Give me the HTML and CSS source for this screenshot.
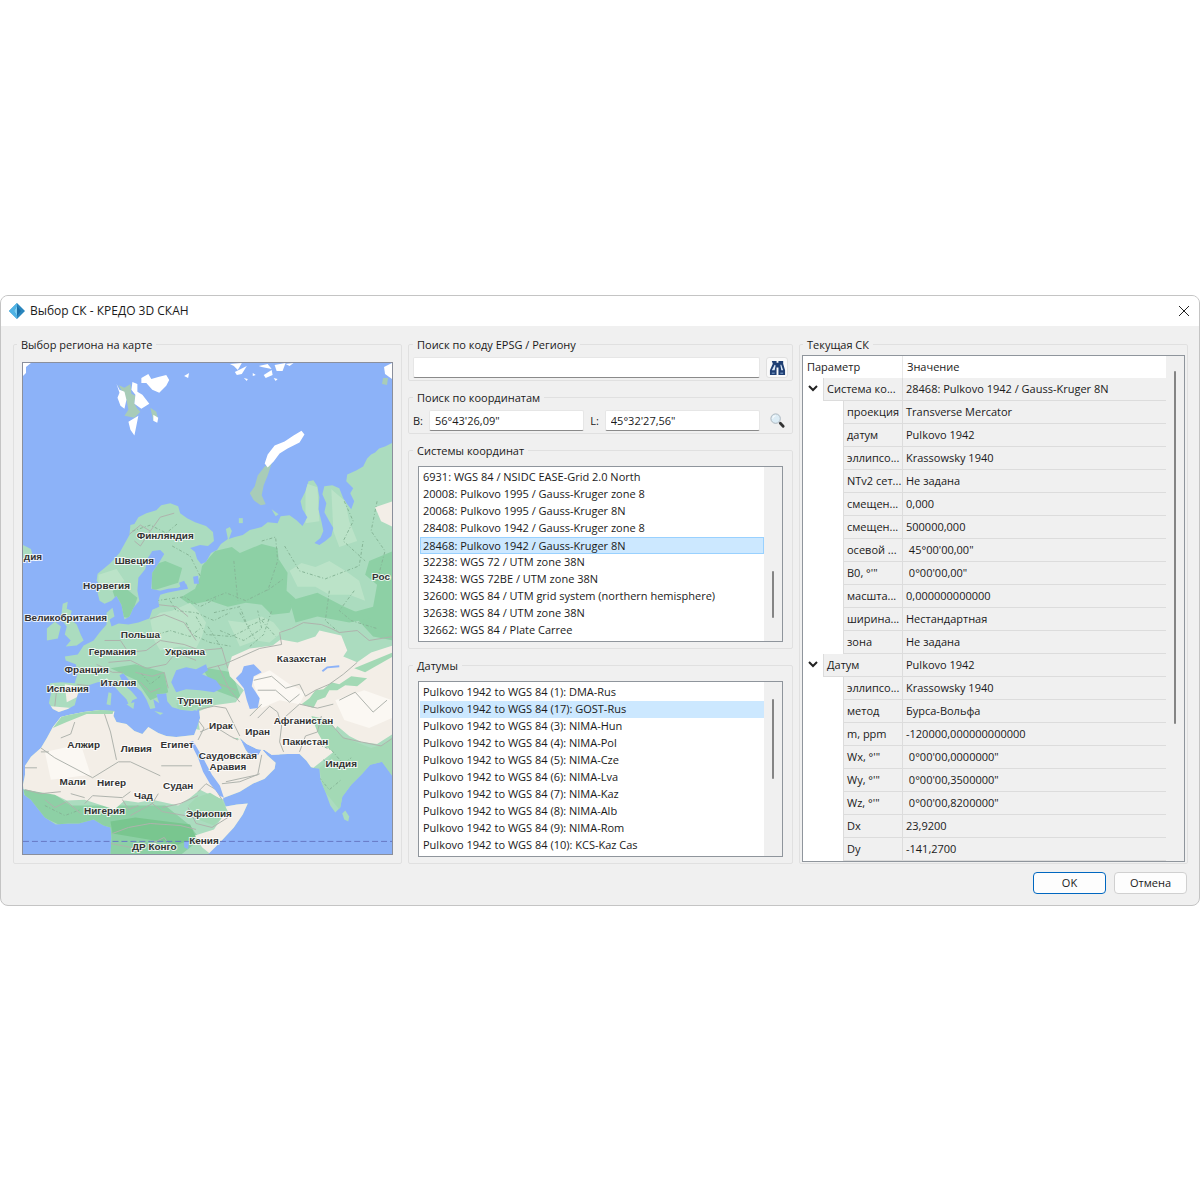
FILE: index.html
```
<!DOCTYPE html>
<html lang="ru">
<head>
    <meta charset="UTF-8">
    <meta name="viewport" content="width=device-width, initial-scale=1.0">
    <title>Выбор СК - КРЕДО 3D СКАН</title>
    <link rel="stylesheet" href="styles.css">
</head>
<body>
    <main class="dialog">
        <header class="titlebar">
            <svg class="logo" viewBox="0 0 16 16">
                <path d="M8 0L16 8L8 16L0 8Z" fill="#2a86bd"/>
                <path d="M8 0L8 16L0 8Z" fill="#4fb4e6"/>
                <path d="M8 3L12 8L8 13L5 8Z" fill="#1b6fa8"/>
                <path d="M8 3L8 13L5 8Z" fill="#7fd0f4"/>
            </svg>
            <h1>Выбор СК - КРЕДО 3D СКАН</h1>
            <button class="close" aria-label="Закрыть">
                <svg viewBox="0 0 12 12"><path d="M1 1L11 11M11 1L1 11" stroke="#222" fill="none"/></svg>
            </button>
        </header>

        <form class="content">
            <fieldset class="map-group">
                <legend>Выбор региона на карте</legend>
                <svg class="map" viewBox="22 361 371 494" preserveAspectRatio="xMidYMid slice">
                    <defs>
                        <path id="land" d="M394 441L386 445L380 447L376 451L372 453L368 457L366 461L364 465L357 469L348 473L347 480L354 487L351 492L355 500L352 508L348 503L344 497L340 487L333 484L325 485L323 493L327 502L325 511L330 520L334 527L332 535L326 540L320 544L315 542L321 537L324 530L322 520L319 508L320 496L318 485L314 479L309 480L306 490L301 500L303 508L308 516L303 525L297 519L290 514L281 515L278 522L268 521L262 526L250 529L243 534L235 536L229 538L232 530L230 526L226 528L228 538L221 543L217 549L211 552L206 561L201 563L197 558L195 551L190 547L200 544L208 545L214 540L213 531L206 525L195 521L187 517L180 512L178 505L170 502L161 504L156 509L146 512L138 516L134 523L130 524L129 534L124 543L119 552L110 562L97 573L96 580L100 586L97 592L99 600L104 603L111 600L116 595L121 604L124 619L129 616L133 607L139 600L137 590L138 577L145 568L147 558L152 550L160 549L164 553L158 563L152 572L151 588L160 590L168 588L178 587L186 583L188 588L177 590L167 592L160 594L158 600L159 606L152 609L149 618L138 622L128 624L118 623L111 626L109 619L114 616L112 607L106 612L106 624L99 632L93 640L83 645L77 654L64 656L65 660L75 664L77 673L74 683L60 682L49 683L50 694L48 703L52 709L58 712L67 709L74 705L77 694L88 685L97 682L106 681L113 685L119 692L126 699L129 706L132 700L137 698L131 691L123 684L119 675L123 673L131 683L141 691L146 699L150 709L155 708L153 699L159 703L156 694L166 693L167 701L172 707L182 710L192 711L199 709L200 718L197 727L194 735L185 736L176 737L166 736L158 733L148 727L142 734L134 731L126 724L116 722L113 716L114 711L100 710L83 712L68 715L60 717L52 727L46 738L40 748L30 757L24 766L24 775L22 785L23 795L30 800L36 808L44 818L55 825L67 824L78 824L93 820L103 826L110 828L111 838L110 855L208 855L220 843L234 828L243 815L248 804L237 805L226 807L223 799L224 798L240 792L253 784L265 779L275 769L276 763L267 755L262 749L259 755L251 757L246 750L240 738L247 744L257 749L265 750L272 755L288 754L300 754L307 761L312 768L320 769L321 780L326 792L331 806L336 813L341 808L343 797L352 785L363 774L371 765L383 762L394 777Z"/>
                        <clipPath id="land-clip"><use href="#land"/></clipPath>
                    </defs>

                    <rect x="22" y="361" width="371" height="494" fill="#8cb2f8"/>
                    <use href="#land" fill="#abdcbf"/>

                    <g clip-path="url(#land-clip)">
                        <!-- леса -->
                        <g fill="#8dd0a5">
                            <path d="M202 565L215 550L232 546L240 552L262 543L278 547L279 558L288 572L287 590L296 598L290 612L272 614L262 604L246 602L228 606L210 600L190 604L180 597L195 588L200 576Z"/>
                            <path d="M150 565L165 560L182 567L178 582L152 590Z"/>
                            <path d="M370 560L394 550L394 640L374 636L352 612L374 606L378 584L366 574Z"/>
                            <path d="M112 590L122 585L137 597L130 618L121 616Z"/>
                            <path d="M290 600L318 592L345 606L372 618L350 622L318 616L296 622Z"/>
                            <path d="M22 790L50 792L70 806L104 806L140 806L165 806L190 826L200 840L180 856L110 856L100 830L60 826L30 812Z"/>
                            <path d="M110 668L135 664L164 672L168 692L150 700L136 680Z"/>
                            <path d="M202 667L232 672L242 700L215 690Z"/>
                        </g>
                        <path d="M110 822L135 818L190 825L196 838L178 845L112 834Z" fill="#79c68f"/>
                        <!-- степи и пустыни -->
                        <g fill="#f3eee7">
                            <path d="M228 668L232 656L250 648L273 645L281 639L298 642L316 636L320 630L342 635L348 650L344 656L358 662L372 652L394 645L394 734L378 744L362 742L350 736L338 726L330 738L334 752L314 768L264 754L256 760L238 738L220 738L200 732L197 712L214 705L236 702L244 690L230 676Z"/>
                            <path d="M20 720L50 706L118 712L200 730L280 750L280 790L224 800L212 796L200 790L190 798L178 806L152 800L138 803L124 801L114 810L84 800L66 801L54 795L36 792L20 789Z"/>
                            <path d="M228 800L250 800L244 822L212 856L202 848L195 836L214 830L222 818Z"/>
                            <path d="M376 506L394 500L394 526L382 520Z"/>
                            <path d="M64 684L76 686L78 696L66 702Z"/>
                            <path d="M183 702L196 700L198 708L186 710Z"/>
                        </g>
                        <g fill="#fbf8f3">
                            <path d="M252 678L270 670L290 684L306 692L300 704L280 700L262 708Z"/>
                            <path d="M336 700L365 690L393 700L393 718L370 728L345 720Z"/>
                            <path d="M44 752L80 744L90 775L50 780Z"/>
                        </g>
                        <!-- горы -->
                        <g fill="#a3d9b5">
                            <path d="M302 704L310 698L316 690L324 689L332 682L340 684L352 676L368 678L358 686L346 685L338 690L330 690L326 697L318 700L314 708Z"/>
                            <path d="M312 716L330 720L338 732L346 738L372 748L386 744L394 736L394 780L372 766L340 810L324 790L320 768L328 762L334 752L326 746L318 732Z"/>
                            <path d="M62 715L82 708L114 708L112 714L86 714L66 722L52 728Z"/>
                            <path d="M196 798L210 793L222 800L228 812L214 826L198 820L188 806Z"/>
                            <path d="M355 668L394 652L394 656L366 672Z"/>
                            <path d="M176 703L196 700L200 710L178 710Z"/>
                        </g>
                        <g fill="#bbe3c8">
                            <path d="M98 574L116 568L124 580L112 590L98 588Z"/>
                            <path d="M150 620L160 612L172 610L190 602L198 610L206 622L202 636L196 648L180 646L160 650L154 640Z"/>
                            <path d="M290 570L302 562L316 566L330 560L346 570L360 580L366 600L350 594L330 594L316 586L298 586Z"/>
                            <path d="M228 620L244 622L262 616L274 622L282 632L270 642L256 640L240 646Z"/>
                            <path d="M332 488L346 500L350 520L358 540L340 546L334 530Z"/>
                            <path d="M306 482L318 486L320 520L306 522Z"/>
                        </g>
                        <path class="texture" d="M132 530L150 524L166 532L178 522M172 545L190 555L200 575M206 600L226 592L246 600L270 588L284 578M214 612L240 606L248 626L266 618M220 630L244 640L262 628L258 610M156 600L184 596L200 606L216 598M196 616L206 634L232 636L248 628M262 540L276 536L278 560L268 590M234 560L238 600M285 545L300 570L326 578L360 565L364 540M345 500L354 520L344 540L366 560M355 590L340 610L352 620L378 628M330 590L326 620L340 632M240 612L256 640M208 626L222 648M262 620L276 636M320 778L330 790L342 780M324 760L338 768L352 758M318 744L332 750L344 764M44 806L64 816L80 810M150 636L170 630L190 636L200 628M170 600L176 610L196 612L214 620L230 612M186 622L192 634L210 642L232 646M250 646L264 634L272 610M378 500L372 530L386 550L378 580M160 676L150 684L140 672"/>
                        <path class="border" d="M128 534L140 524L150 530L160 516L174 512M150 530L140 545L134 540M104 640L120 640L128 652L146 650L160 640L184 644L200 650L222 648L228 668M108 662L130 660L146 668L166 664L176 652L196 660M96 664L112 672L122 672M135 672L152 676L164 672L168 688M140 682L150 692L160 688M150 618L164 614L184 622L196 640M158 604L176 606L188 616M48 690L56 688L54 706M76 684L92 686M218 665L230 690L240 702M205 680L220 684L236 690"/>
                        <path class="border" d="M208 668L224 664L242 656L260 648L282 644L280 632L292 628L304 622L322 624L332 628L340 632L358 630L370 640L394 636M358 662L344 674L330 684L316 690L306 696L300 684L286 688L272 676L254 680M262 704L250 716M258 690L276 690L290 702L300 694M258 718L270 706L278 712L282 726L280 742L284 752M282 720L300 704L318 708L334 704M300 752L306 736L318 732L322 716M330 722L344 738L362 742L382 746L394 738M340 700L356 692L374 712L388 700M196 710L214 706L226 708L232 720L240 736M200 732L214 726L230 736L238 740M198 720L204 728L198 740M262 755L258 775L226 782M222 784L240 782L260 774"/>
                        <path class="border" d="M60 738L70 734L74 722M40 748L54 758L92 778L118 762L130 762L160 776M104 714L110 732L116 760M161 766L192 766M24 768L36 768M40 752L48 752M84 804L92 796L122 798L130 792M70 794L84 798M122 800L128 810L138 806M130 816L152 804L162 812L196 818M112 834L128 828L150 824L180 826L196 830M152 804L158 794M162 808L180 804L198 796M188 808L196 824L212 828L228 818M110 844L140 850L164 838L172 850M24 790L40 794L60 792M44 800L54 808L66 802L80 814M198 792L206 784L216 790L222 800"/>
                    </g>

                    <!-- внутренние моря -->
                    <g fill="#8cb2f8">
                        <path d="M171 682L176 670L186 667L196 669L206 664L208 670L202 674L216 680L222 688L214 692L200 690L186 689L176 692Z"/>
                        <path d="M242 672L236 678L244 688L247 700L250 709L258 708L260 698L252 686L254 676L262 672L254 664L244 666Z"/>
                        <path d="M190 742L193 741L204 760L212 775L220 786L224 798L220 796L210 784L203 772L198 758Z"/>
                        <path d="M179 582L184 580L187 586L181 589Z"/>
                        <path d="M193 576L198 575L199 583L194 583Z"/>
                        <path d="M184 842L189 842L188 850L184 848Z"/>
                    </g>
                    <path d="M323 671L328 667L340 666" fill="none" stroke="#8cb2f8" stroke-width="2"/>

                    <!-- острова -->
                    <g fill="#abdcbf">
                        <path d="M62 603L67 601L66 608L71 610L69 618L76 624L80 634L83 640L76 645L65 646L70 640L64 634L66 626L60 618Z"/>
                        <path d="M46 628L54 621L60 626L57 638L46 640Z"/>
                        <path d="M22 544L30 548L32 556L22 560Z"/>
                        <path d="M126 704L134 702L133 709Z"/>
                        <path d="M108 692L111 693L110 705L106 704Z"/>
                        <path d="M192 709L198 706L197 711Z"/>
                        <path d="M154 711L163 713L160 715Z"/>
                        <path d="M343 814L346 811L350 817L349 822L345 820Z"/>
                        <path d="M239 517L243 517L243 522L239 522Z"/>
                        <path d="M272 508L279 513L276 515Z"/>
                    </g>
                    <g fill="#a8ccb8">
                        <path d="M265 465L258 474L255 485L250 492L254 499L261 504L266 503L262 494L264 484L268 474L272 462Z"/>
                        <path d="M118 383L124 386L130 382L131 392L135 394L134 402L137 407L140 410L134 416L124 414L128 408L126 398Z"/>
                        <path d="M150 406L156 410L158 418L153 419Z"/>
                        <path d="M384 376L389 376L388 383L383 382Z"/>
                    </g>
                    <g fill="#fff">
                        <path d="M302 429L305 433L300 441L288 447L280 452L274 460L268 466L265 462L268 453L275 444L285 440L294 434Z"/>
                        <path d="M116 382L119 388L124 390L126 398L124 407L120 404L117 396L119 391Z"/>
                        <path d="M132 380L137 382L137 390L142 393L149 402L141 407L134 402L135 393L131 388Z"/>
                        <path d="M141 376L148 372L151 377L158 375L166 373L169 378L166 384L159 391L152 388L146 381L141 381Z"/>
                        <path d="M128 420L138 414L136 424L134 434L130 428Z"/>
                        <path d="M153 413L158 416L157 421L153 419Z"/>
                        <path d="M184 374L189 371L188 376Z"/>
                        <path d="M230 362L242 361L238 368L234 364Z"/>
                        <path d="M235 370L247 364L242 372L237 373Z"/>
                        <path d="M259 364L268 362L272 367L262 365Z"/>
                        <path d="M275 363L286 361L283 369L277 369Z"/>
                        <path d="M264 373L272 368L273 373L266 376Z"/>
                        <path d="M286 362L294 361L290 364Z"/>
                        <path d="M385 365L393 361L393 377L386 372Z"/>
                        <path d="M22 361L30 361L25 365L25 371L22 374Z"/>
                        <path d="M244 376L248 377L247 379ZM253 371L256 373L253 374ZM274 376L278 377L276 379Z"/>
                    </g>
                    <path class="equator" d="M22 842H393"/>

                    <g class="labels">
                        <text x="32" y="559">дия</text>
                        <text x="165" y="538">Финляндия</text>
                        <text x="134" y="563">Швеция</text>
                        <text x="106" y="588">Норвегия</text>
                        <text x="65" y="620">Великобритания</text>
                        <text x="140" y="638">Польша</text>
                        <text x="112" y="655">Германия</text>
                        <text x="185" y="655">Украина</text>
                        <text x="86" y="673">Франция</text>
                        <text x="118" y="686">Италия</text>
                        <text x="67" y="692">Испания</text>
                        <text x="195" y="704">Турция</text>
                        <text x="302" y="662">Казахстан</text>
                        <text x="382" y="579">Рос</text>
                        <text x="221" y="729">Ирак</text>
                        <text x="258" y="735">Иран</text>
                        <text x="304" y="724">Афганистан</text>
                        <text x="306" y="745">Пакистан</text>
                        <text x="342" y="767">Индия</text>
                        <text x="83" y="748">Алжир</text>
                        <text x="136" y="752">Ливия</text>
                        <text x="177" y="748">Египет</text>
                        <text x="228" y="759">Саудовская</text>
                        <text x="228" y="770">Аравия</text>
                        <text x="72" y="785">Мали</text>
                        <text x="111" y="786">Нигер</text>
                        <text x="143" y="799">Чад</text>
                        <text x="178" y="789">Судан</text>
                        <text x="104" y="814">Нигерия</text>
                        <text x="209" y="817">Эфиопия</text>
                        <text x="204" y="845">Кения</text>
                        <text x="154" y="851">ДР Конго</text>
                    </g>
                </svg>
            </fieldset>

            <div class="middle">
                <fieldset>
                    <legend id="code-label">Поиск по коду EPSG / Региону</legend>
                    <div class="search-row">
                        <input type="text" aria-labelledby="code-label">
                        <button type="button" class="tool raised" aria-label="Найти по коду">
                            <svg viewBox="0 0 18 18">
                                <path d="M3 2H8V4H10V2H15V5L17 12V17H10V9H8V17H1V12L4 5Z" fill="#1f3f73"/>
                                <path d="M6 6L3 12H6L7 7ZM12 6L13 12H15L13 6Z" fill="#dbe8f6"/>
                                <path d="M3 15H6M12 15H15" stroke="#8fb0d8" fill="none"/>
                            </svg>
                        </button>
                    </div>
                </fieldset>
                <fieldset>
                    <legend>Поиск по координатам</legend>
                    <div class="search-row">
                        <label for="lat">B:</label>
                        <input type="text" id="lat" value="56°43'26,09&quot;">
                        <label for="lon">L:</label>
                        <input type="text" id="lon" value="45°32'27,56&quot;">
                        <button type="button" class="tool" aria-label="Найти по координатам">
                            <svg viewBox="0 0 18 18">
                                <path d="M12 12L15 15" stroke="#333" stroke-width="3" stroke-linecap="round"/>
                                <circle cx="7" cy="7" r="5" fill="#dcecf5" stroke="#a9b4bc"/>
                                <path d="M4 7A3 3 0 0 1 7 4" stroke="#fff" fill="none"/>
                            </svg>
                        </button>
                    </div>
                </fieldset>
                <fieldset class="list-group">
                    <legend id="crs-label">Системы координат</legend>
                    <div class="list">
                        <select size="10" aria-labelledby="crs-label">
                            <option>6931: WGS 84 / NSIDC EASE-Grid 2.0 North</option>
                            <option>20008: Pulkovo 1995 / Gauss-Kruger zone 8</option>
                            <option>20068: Pulkovo 1995 / Gauss-Kruger 8N</option>
                            <option>28408: Pulkovo 1942 / Gauss-Kruger zone 8</option>
                            <option class="current" selected>28468: Pulkovo 1942 / Gauss-Kruger 8N</option>
                            <option>32238: WGS 72 / UTM zone 38N</option>
                            <option>32438: WGS 72BE / UTM zone 38N</option>
                            <option>32600: WGS 84 / UTM grid system (northern hemisphere)</option>
                            <option>32638: WGS 84 / UTM zone 38N</option>
                            <option>32662: WGS 84 / Plate Carree</option>
                        </select>
                        <div class="scrollbar"><div class="space crs-space"></div><div class="thumb crs-thumb"></div></div>
                    </div>
                </fieldset>
                <fieldset class="list-group">
                    <legend id="datum-label">Датумы</legend>
                    <div class="list">
                        <select size="10" aria-labelledby="datum-label">
                            <option>Pulkovo 1942 to WGS 84 (1): DMA-Rus</option>
                            <option selected>Pulkovo 1942 to WGS 84 (17): GOST-Rus</option>
                            <option>Pulkovo 1942 to WGS 84 (3): NIMA-Hun</option>
                            <option>Pulkovo 1942 to WGS 84 (4): NIMA-Pol</option>
                            <option>Pulkovo 1942 to WGS 84 (5): NIMA-Cze</option>
                            <option>Pulkovo 1942 to WGS 84 (6): NIMA-Lva</option>
                            <option>Pulkovo 1942 to WGS 84 (7): NIMA-Kaz</option>
                            <option>Pulkovo 1942 to WGS 84 (8): NIMA-Alb</option>
                            <option>Pulkovo 1942 to WGS 84 (9): NIMA-Rom</option>
                            <option>Pulkovo 1942 to WGS 84 (10): KCS-Kaz Cas</option>
                        </select>
                        <div class="scrollbar"><div class="space datum-space"></div><div class="thumb datum-thumb"></div></div>
                    </div>
                </fieldset>
            </div>

            <fieldset class="tree-group">
                <legend>Текущая СК</legend>
                <div class="tree">
                    <table>
                        <thead>
                            <tr><th scope="col" class="param">Параметр</th><th scope="col">Значение</th></tr>
                        </thead>
                        <tbody>
                            <tr class="parent"><th scope="row"><div><button type="button" aria-label="Свернуть"><svg viewBox="0 0 10 10"><path d="M1 3L5 7L9 3"/></svg></button><span>Система ко...</span></div></th><td>28468: Pulkovo 1942 / Gauss-Kruger 8N</td></tr>
                            <tr><th scope="row"><div><span>проекция</span></div></th><td>Transverse Mercator</td></tr>
                            <tr><th scope="row"><div><span>датум</span></div></th><td>Pulkovo 1942</td></tr>
                            <tr><th scope="row"><div><span>эллипсо...</span></div></th><td>Krassowsky 1940</td></tr>
                            <tr><th scope="row"><div><span>NTv2 сет...</span></div></th><td>Не задана</td></tr>
                            <tr><th scope="row"><div><span>смещен...</span></div></th><td>0,000</td></tr>
                            <tr><th scope="row"><div><span>смещен...</span></div></th><td>500000,000</td></tr>
                            <tr><th scope="row"><div><span>осевой ...</span></div></th><td>&nbsp;45°00'00,00"</td></tr>
                            <tr><th scope="row"><div><span>B0, °'"</span></div></th><td>&nbsp;0°00'00,00"</td></tr>
                            <tr><th scope="row"><div><span>масшта...</span></div></th><td>0,000000000000</td></tr>
                            <tr><th scope="row"><div><span>ширина...</span></div></th><td>Нестандартная</td></tr>
                            <tr><th scope="row"><div><span>зона</span></div></th><td>Не задана</td></tr>
                            <tr class="parent"><th scope="row"><div><button type="button" aria-label="Свернуть"><svg viewBox="0 0 10 10"><path d="M1 3L5 7L9 3"/></svg></button><span>Датум</span></div></th><td>Pulkovo 1942</td></tr>
                            <tr><th scope="row"><div><span>эллипсо...</span></div></th><td>Krassowsky 1940</td></tr>
                            <tr><th scope="row"><div><span>метод</span></div></th><td>Бурса-Вольфа</td></tr>
                            <tr><th scope="row"><div><span>m, ppm</span></div></th><td>-120000,000000000000</td></tr>
                            <tr><th scope="row"><div><span>Wx, °'"</span></div></th><td>&nbsp;0°00'00,0000000"</td></tr>
                            <tr><th scope="row"><div><span>Wy, °'"</span></div></th><td>&nbsp;0°00'00,3500000"</td></tr>
                            <tr><th scope="row"><div><span>Wz, °'"</span></div></th><td>&nbsp;0°00'00,8200000"</td></tr>
                            <tr><th scope="row"><div><span>Dx</span></div></th><td>23,9200</td></tr>
                            <tr><th scope="row"><div><span>Dy</span></div></th><td>-141,2700</td></tr>
                        </tbody>
                    </table>
                    <div class="scrollbar"><div class="space tree-space"></div><div class="thumb tree-thumb"></div></div>
                </div>
            </fieldset>
        </form>

        <footer>
            <button class="push default">OK</button>
            <button class="push">Отмена</button>
        </footer>
    </main>
</body>
</html>
```
FILE: styles.css
```
*{
    margin: 0;
    padding: 0;
    box-sizing: border-box;
}
body{
    min-height: 100vh;
    display: flex;
    align-items: center;
    background-color: white;
    color: #1a1a1a;
    font-family: "Open Sans", "Noto Sans", sans-serif;
    font-size: 11px;
    line-height: 17px;
}
button, input, select{
    font: inherit;
    color: inherit;
}
.dialog{
    width: 100%;
    background-color: #f0f0f0;
    border: 1px solid #c4c4c4;
    border-radius: 8px;
    overflow: hidden;
}
.titlebar{
    display: flex;
    align-items: center;
    gap: 5px;
    height: 30px;
    padding: 0 8px;
    background-color: white;
}
.titlebar h1{
    flex: 1;
    font-size: 12px;
    font-weight: normal;
}
.logo{
    width: 16px;
    height: 16px;
}
.close{
    width: 14px;
    height: 14px;
    border: none;
    background: none;
}
.close svg{
    display: block;
    width: 12px;
    height: 12px;
    margin: auto;
}

/* группы */
.content{
    display: grid;
    grid-template-columns: 389fr 385fr 389fr;
    gap: 6px;
    padding: 10px 11px 0 12px;
}
fieldset{
    min-width: 0;
    border: 1px solid #e0e0e0;
    border-radius: 2px;
}
legend{
    margin-left: 4px;
    padding: 0 4px;
}
.map-group{
    padding: 9px 8px 0;
}
.map-group legend{
    margin-left: -5px;
}
.map{
    display: block;
    width: 100%;
    border: 1px solid #8a8f9c;
}
.border, .texture, .equator{
    fill: none;
    stroke: #aeb2ac;
    stroke-linejoin: round;
}
.texture{
    stroke: #86b496;
    stroke-dasharray: 3 2 1 2;
}
.equator{
    stroke: #6678c4;
    stroke-dasharray: 6 3;
}
.labels text{
    font-family: "Liberation Sans", sans-serif;
    font-size: 10px;
    font-weight: bold;
    text-anchor: middle;
    fill: #333;
    stroke: white;
    stroke-width: 2px;
    stroke-opacity: 0.8;
    paint-order: stroke;
}

/* поиск */
.middle{
    display: flex;
    flex-direction: column;
    gap: 8px;
    min-width: 0;
}
.search-row{
    display: flex;
    align-items: center;
    gap: 6px;
    padding: 4px 4px 2px;
}
.search-row input{
    flex: 1;
    min-width: 0;
    height: 21px;
    padding: 0 5px;
    background-color: white;
    border: 1px solid #e6e6e6;
    border-bottom-color: #8a8a8a;
    border-radius: 2px;
}
.tool{
    width: 22px;
    height: 21px;
    border: none;
    background: none;
}
.raised{
    border: 1px solid #e0e0e0;
    border-radius: 3px;
    background-color: #fafafa;
}
.tool svg{
    display: block;
    width: 17px;
    height: 17px;
    margin: auto;
}

/* списки */
.list-group{
    padding: 7px 9px 6px;
}
.list-group legend{
    margin-left: -5px;
}
.list{
    display: flex;
    border: 1px solid #8f959c;
    background-color: white;
    padding: 2px 0 2px 1px;
}
.list select{
    flex: 1;
    min-width: 0;
    height: 170px;
    border: none;
    outline: none;
    background-color: white;
    overflow: hidden;
}
.list option{
    height: 17px;
    min-height: 17px;
    padding: 0 3px;
    line-height: 17px;
}
.list option:checked{
    color: #1a1a1a;
    background: linear-gradient(#cce8ff, #cce8ff);
}
.list option.current{
    border: 1px solid #99d1ff;
    line-height: 15px;
    padding: 0 2px;
}
.scrollbar{
    display: flex;
    flex-direction: column;
    align-items: center;
    flex: 0 0 18px;
    background-color: #f0f0f0;
}
.list .scrollbar{
    margin: -2px 0;
}
.thumb{
    width: 2px;
    background-color: #858585;
    border-radius: 1px;
}
.crs-space{ height: 60%; }
.crs-thumb{ height: 27%; }
.datum-space{ height: 10%; }
.datum-thumb{ height: 46%; }
.tree-space{ height: 3%; }
.tree-thumb{ height: 70%; }

/* таблица параметров */
.tree-group{
    padding: 2px 2px 0;
}
.tree-group legend{
    margin-left: 1px;
}
.tree{
    display: flex;
    border: 1px solid #8f959c;
}
table{
    flex: 1;
    border-spacing: 0;
    table-layout: fixed;
    background-color: #f0f0f0;
}
th{
    font-weight: normal;
    text-align: left;
}
thead th{
    height: 22px;
    padding: 0 4px;
    background-color: white;
}
.param{
    width: 100px;
    border-right: 1px solid #e8e8e8;
}
tbody th{
    background-color: white;
}
tbody th div{
    display: flex;
    padding-left: 40px;
}
tbody th span{
    flex: 1;
    height: 23px;
    padding-left: 3px;
    line-height: 22px;
    white-space: nowrap;
    background-color: #f0f0f0;
    border: 1px solid #dcdcdc;
    border-width: 0 1px 1px 1px;
}
tbody td{
    height: 23px;
    padding: 0 3px;
    white-space: nowrap;
    border-bottom: 1px solid #dcdcdc;
}
.parent th div{
    padding-left: 0;
}
.parent button{
    width: 20px;
    border: none;
    background: none;
}
.parent svg{
    display: block;
    width: 10px;
    height: 10px;
    margin: 0 auto 2px;
    fill: none;
    stroke: #222;
    stroke-width: 2;
}

footer{
    display: flex;
    justify-content: flex-end;
    gap: 8px;
    padding: 8px 12px 11px;
}
.push{
    width: 73px;
    height: 22px;
    border: 1px solid #d0d0d0;
    border-radius: 4px;
    background-color: #fdfdfd;
}
.default{
    border-color: #0067c0;
}
```
